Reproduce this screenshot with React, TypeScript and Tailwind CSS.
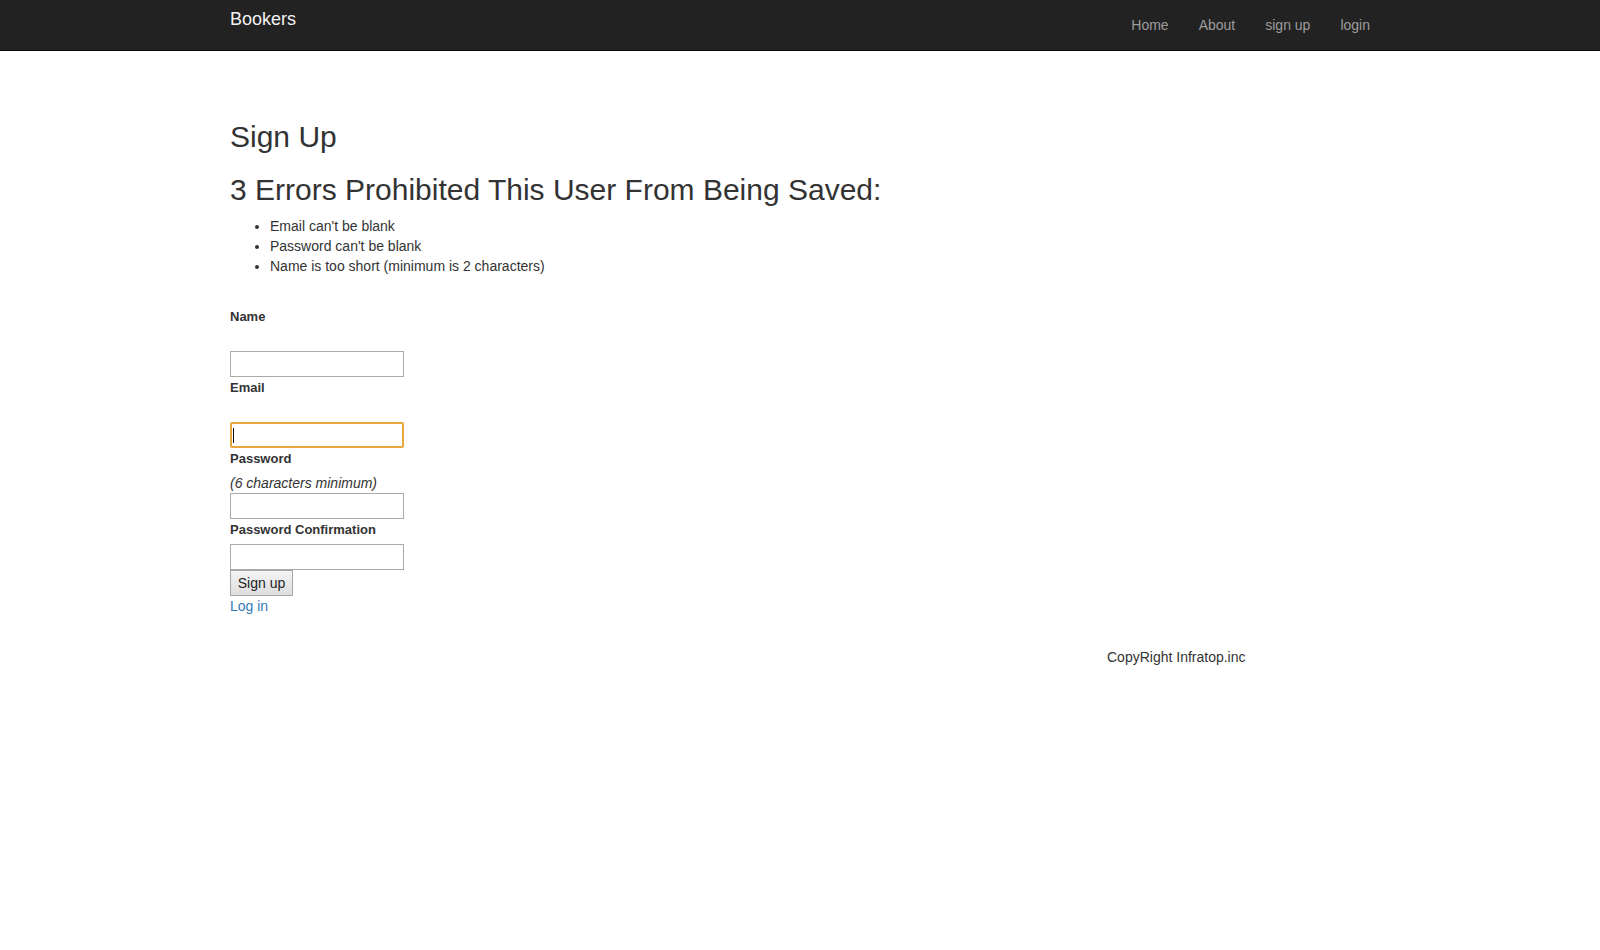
import React from "react";

export default function App() {
  const labelCls = "block h-[20px] pt-[1px] text-[13px] leading-[20px] font-bold";
  return (
    <div className="min-h-[950px] bg-white text-[14px] leading-[20px] text-[#333333] font-['Liberation_Sans',Arial,sans-serif]">
      <nav className="h-[51px] bg-[#222222] border-b border-[#080808]">
        <div className="mx-auto flex h-[50px] w-[1170px] justify-between pl-[15px]">
          <a className="pt-[9px] text-[18px] leading-[20px] text-[#f2f2f2]" href="#">
            Bookers
          </a>
          <ul className="flex">
            {["Home", "About", "sign up", "login"].map((t) => (
              <li key={t}>
                <a className="block px-[15px] py-[15px] leading-[20px] text-[#9d9d9d]" href="#">
                  {t}
                </a>
              </li>
            ))}
          </ul>
        </div>
      </nav>

      <main className="mx-auto w-[1170px] px-[15px] pt-[69px]">
        <div className="flex flex-col items-start">
          <h2 className="text-[30px] leading-[33px] font-medium">Sign Up</h2>
          <h2 className="mt-[20px] text-[30px] leading-[33px] font-medium">
            3 Errors Prohibited This User From Being Saved:
          </h2>
          <ul className="mt-[10px] list-disc pl-[40px]">
            <li>Email can't be blank</li>
            <li>Password can't be blank</li>
            <li>Name is too short (minimum is 2 characters)</li>
          </ul>

          <label className={`mt-[30px] ${labelCls}`}>Name</label>
          <input
            type="text"
            className="mt-[25px] h-[26px] w-[174px] border border-[#a9a9a9] bg-white px-[2px] outline-none"
          />
          <label className={labelCls}>Email</label>
          <div className="mt-[25px] flex h-[26px] w-[174px] items-center rounded-[2px] border-2 border-[#e6a73d] bg-white pl-[1px]">
            <span className="h-[15px] w-px bg-[#111]"></span>
          </div>
          <label className={labelCls}>Password</label>
          <em className="mt-[5px] italic">(6 characters minimum)</em>
          <input
            type="password"
            className="h-[26px] w-[174px] border border-[#a9a9a9] bg-white px-[2px] outline-none"
          />
          <label className={labelCls}>Password Confirmation</label>
          <input
            type="password"
            className="mt-[5px] h-[26px] w-[174px] border border-[#a9a9a9] bg-white px-[2px] outline-none"
          />
          <button className="h-[26px] w-[63px] border border-[#a6a6a6] bg-gradient-to-b from-[#f4f4f4] to-[#dedede] text-[14px] leading-[20px] text-[#222]">
            Sign up
          </button>
          <a className="text-[#337ab7]" href="#">
            Log in
          </a>
          <p className="mt-[31px] pl-[877px]">CopyRight Infratop.inc</p>
        </div>
      </main>
    </div>
  );
}
